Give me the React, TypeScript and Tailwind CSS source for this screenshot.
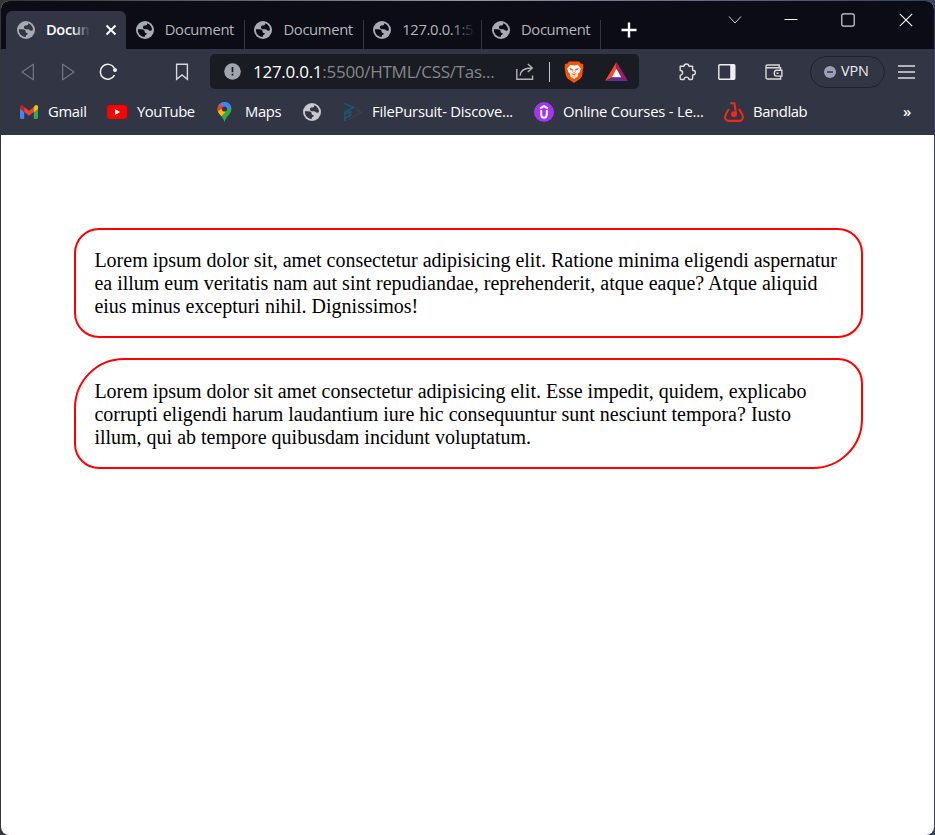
import React from "react";

function Globe({ color = "#a6abb3", bg = "#0b0c15" }: { color?: string; bg?: string }) {
  return (
    <svg className="block h-[18px] w-[18px] shrink-0" viewBox="0 0 18 18" fill="none">
      <circle cx="9" cy="9" r="9" fill={color} />
      <path d="M1.9 8.3 H5.2 C7.4 8.3 8.6 9.1 8.6 10.6 C8.6 11.9 9.4 12.1 10.6 12.1 V13.3 C10.6 13.9 9.4 13.8 9.1 14.3 C8.8 14.9 9 15.6 8.6 16 C4.8 15.9 1.6 12.6 1.9 8.3Z" fill={bg} />
      <path d="M11.2 2.3 C14.3 3.4 16 6 16 8.9 C15.4 9.7 14.4 9.9 13.4 9.5 C12.5 9.1 12.2 8.3 11.3 8.2 H8.8 C7.6 8.2 6.9 7.4 6.9 6.3 C6.9 5.2 7.7 4.6 8.8 4.6 H9.6 C10.5 4.6 11.3 3.6 11.2 2.3Z" fill={bg} />
    </svg>
  );
}

function Tab({ title, fade }: { title: string; fade?: boolean }) {
  return (
    <div className="flex h-[38px] w-[118.75px] shrink-0 items-center pl-[9.7px]">
      <Globe />
      <div className="relative -top-px ml-[11px] h-5 w-[73px] overflow-hidden whitespace-nowrap text-[14.8px] leading-5 tracking-[-0.35px] text-[#b4b5ba]">
        {title}
        {fade && <span className="absolute inset-y-0 right-0 w-6 bg-linear-to-r from-transparent to-[#0b0c15]" />}
      </div>
      <div className="ml-auto mt-[9px] h-[29px] w-px bg-[#35363d]" />
    </div>
  );
}

function TabStrip() {
  return (
    <div className="flex h-12 items-start bg-[#0b0c15] pl-[5px]">
      <div className="mt-[10px] flex h-[38px] w-[120px] shrink-0 items-center rounded-t-[6px] bg-[#323543] pl-[11px]">
        <Globe bg="#323543" />
        <div className="relative -top-px ml-[11px] h-5 w-[44px] overflow-hidden whitespace-nowrap text-[14.6px] font-semibold leading-5 tracking-[-0.35px] text-white">
          Document
          <span className="absolute inset-y-0 right-0 w-[18px] bg-linear-to-r from-transparent to-[#323543]" />
        </div>
        <svg className="ml-[15px] h-[12px] w-[12px]" viewBox="0 0 12 12" stroke="white" strokeWidth="1.9"><path d="M1.5 1.5 10.5 10.5M10.5 1.5 1.5 10.5" /></svg>
      </div>
      <div className="mt-[10px] flex shrink-0">
        <Tab title="Document" />
        <Tab title="Document" />
        <Tab title="127.0.0.1:5500" fade />
        <Tab title="Document" />
      </div>
      <svg className="ml-[20px] mt-[21px] h-4 w-4 shrink-0" viewBox="0 0 16 16" stroke="white" strokeWidth="2.4"><path d="M8 .5V15.5M.5 8H15.5" /></svg>
      <svg className="ml-[91px] mt-[13px] h-3 w-[14px] shrink-0" viewBox="0 0 14 12" fill="none" stroke="#d3d3d7" strokeWidth="1"><path d="M1 2.5 7 9 13 2.5" /></svg>
      <svg className="ml-[42px] mt-[12px] h-[14px] w-[14px] shrink-0" viewBox="0 0 14 14" stroke="white" strokeWidth="1"><path d="M.5 6.5H13.5" /></svg>
      <svg className="ml-[43px] mt-[12px] h-[14px] w-[14px] shrink-0" viewBox="0 0 14 14" fill="none" stroke="#d8d8dc" strokeWidth="1.2"><rect x=".8" y=".8" width="12.4" height="12.4" rx="1.7" /></svg>
      <svg className="ml-[43.5px] mt-[12px] h-[14px] w-[14px] shrink-0" viewBox="0 0 14 14" stroke="white" strokeWidth="1.1"><path d="M.8 .8 13.2 13.2M13.2 .8 .8 13.2" /></svg>
    </div>
  );
}

function Shield() {
  return (
    <svg className="h-[22px] w-5 shrink-0" viewBox="0 0 20 22">
      <path d="M5 .5H15L17 2.7 19 2.8 19.4 6 18.2 14.2C17.8 16 16.5 17.5 15 18.6L10 22 5 18.6C3.5 17.5 2.2 16 1.8 14.2L.6 6 1 2.8 3 2.7Z" fill="#fb5206" />
      <path d="M6.2 3.8 10 4.5 13.8 3.8 16.8 7.5 15.7 11 13.6 13.5 13.8 15.2 10 18.1 6.2 15.2 6.4 13.5 4.3 11 3.2 7.5Z" fill="white" />
      <path d="M5.2 7.1 9 7.9 8.4 9.3 6.4 9ZM14.8 7.1 11 7.9 11.6 9.3 13.6 9ZM7.2 12.2 9.1 12.4 10 13.2 10.9 12.4 12.8 12.2 11.2 13.8 10 14.6 8.8 13.8Z" fill="#fb5206" />
      <path d="M9 8.6 8.7 11.1 10 12.2 11.3 11.1 11 8.6M8 16 10 14.9 12 16" fill="none" stroke="#fb5206" strokeWidth=".6" />
    </svg>
  );
}

function Toolbar() {
  return (
    <div className="flex h-[45px] items-center pl-[20px]">
      <svg className="h-[18px] w-[14px] shrink-0" viewBox="0 0 14 18" fill="none" stroke="#747681" strokeWidth="1.2" strokeLinejoin="round"><path d="M12.4 1.2V16.8L.9 9Z" /></svg>
      <svg className="ml-[26px] h-[18px] w-[14px] shrink-0" viewBox="0 0 14 18" fill="none" stroke="#747681" strokeWidth="1.2" strokeLinejoin="round"><path d="M1.6 1.2V16.8L13.1 9Z" /></svg>
      <svg className="ml-[24px] h-[18px] w-[19px] shrink-0" viewBox="0 0 19 18" fill="none" stroke="#f1f1f3" strokeWidth="1.5"><path d="M15.3 5A7.5 7.5 0 1 0 15.5 12.2" /><circle cx="16" cy="7" r="2" fill="#f1f1f3" stroke="none" /></svg>
      <svg className="ml-[57px] h-[18px] w-[14px] shrink-0" viewBox="0 0 14 18" fill="none" stroke="#d9d9dd" strokeWidth="1.4"><path d="M1.6 1.3H12.4V16.3L7 12 1.6 16.3Z" /></svg>
      <div className="ml-[21px] flex h-[35px] w-[429px] shrink-0 items-center rounded-[5px] bg-[#191c22] pl-[14px]">
        <svg className="h-[17px] w-[17px] shrink-0" viewBox="0 0 17 17"><circle cx="8.5" cy="8.5" r="8.3" fill="#a1a5ad" /><path d="M8.5 4V9.3M8.5 10.8V12.6" stroke="#191c22" strokeWidth="1.7" /></svg>
        <div className="ml-[12px] w-[244px] whitespace-nowrap text-[17px] leading-6 tracking-[-0.27px] text-[#85878c]"><span className="text-white">127.0.0.1</span>:5500/HTML/CSS/Tas...</div>
        <svg className="ml-[18px] h-[18px] w-[20px] shrink-0" viewBox="0 0 20 18" fill="none" stroke="#b2b3b6" strokeWidth="1.4"><path d="M1.8 6V16.2H17.6V12.5M5.2 12.6C5.4 8 8.5 5 16.8 5M12.8 .9 17.3 5 12.8 9.1" /></svg>
        <div className="ml-[14px] h-5 w-px bg-[#c4c4c8]" />
        <div className="ml-[14px] flex"><Shield /></div>
        <svg className="ml-[21px] h-5 w-[23px] shrink-0" viewBox="0 0 23 20"><path d="M11.5 0 0 19 7.2 15.5 11.5 7.5Z" fill="#ff4724" /><path d="M11.5 0 23 19 15.8 15.5 11.5 7.5Z" fill="#9e1f63" /><path d="M0 19H23L15.8 15.2H7.2Z" fill="#662d91" /><path d="M11.5 6.8 16.2 15.3H6.8Z" fill="white" /></svg>
      </div>
      <svg className="ml-[39px] h-[18px] w-[19px] shrink-0" viewBox="0 0 19 18" fill="none" stroke="#dddde1" strokeWidth="1.4" strokeLinejoin="round"><path d="M2.2 3.2H6Q6.2 1 8.5 1T11 3.2H14.6V7.2Q17.4 7.2 17.4 9.6T14.6 12V15.2Q14.6 16.5 13.3 16.5H11Q10.8 14.1 8.5 14.1T6 16.5H3.4Q2.2 16.5 2.2 15.2V12.4Q4.6 11.8 4.6 9.8T2.2 7.3Z" /></svg>
      <svg className="ml-[21px] h-4 w-[18px] shrink-0" viewBox="0 0 18 16"><rect x=".8" y=".8" width="16" height="14.4" rx="1" fill="none" stroke="#eeeef0" strokeWidth="1.4" /><path d="M12.2 1H17V15H12.2Z" fill="#eeeef0" /></svg>
      <svg className="ml-[29px] h-4 w-[18px] shrink-0" viewBox="0 0 18 16" fill="none" stroke="#d9d9dd" strokeWidth="1.4"><path d="M15.6 6.2V3.8H2.4A1.4 1.4 0 0 1 2.4 1H14.2V3.6M1 2.4V13.6Q1 15 2.4 15H15.6V12.2M16.9 6.3H11.5Q9.3 6.3 9.3 9.2T11.5 12.1H16.9ZM11.5 9.2H13.4" /></svg>
      <div className="ml-[27px] flex h-8 w-[75px] shrink-0 items-center rounded-full border border-[#20222d] pl-[13px] text-[14.4px] text-[#ededf1]">
        <svg className="mr-[5px] h-3 w-3 shrink-0" viewBox="0 0 12 12"><circle cx="6" cy="6" r="6" fill="#9b9fb8" /><path d="M3 6H9" stroke="#323543" strokeWidth="1.5" /></svg>
        <span className="relative -top-px tracking-[-0.1px]">VPN</span>
      </div>
      <svg className="ml-[13px] h-[14px] w-[17px] shrink-0" viewBox="0 0 17 14" stroke="#dddde1" strokeWidth="1.3"><path d="M0 1H17M0 7H17M0 13H17" /></svg>
    </div>
  );
}

function Bookmarks() {
  return (
    <div className="flex h-[40px] items-center pb-[4px] pl-[19px] text-[14.8px] leading-5 text-white whitespace-nowrap [&>span]:pb-[2px]">
      <svg className="h-[14px] w-[18px] shrink-0" viewBox="0 0 18 14">
        <path d="M0 3H4.2V14H1.3Q0 14 0 12.7Z" fill="#4285f4" /><path d="M13.8 3H18V12.7Q18 14 16.7 14H13.8Z" fill="#34a853" />
        <path d="M4.2 2 9 5.7 13.8 2V7L9 10.7 4.2 7Z" fill="#ea4335" /><path d="M0 4V2C0 .2 2-.6 3.4.9L4.2 1.8V7.2Z" fill="#c5221f" /><path d="M18 4V2C18 .2 16-.6 14.6.9L13.8 1.8V7.2Z" fill="#fbbc04" />
      </svg>
      <span className="ml-[10px] w-[39px] tracking-[-0.3px]">Gmail</span>
      <svg className="ml-[20px] h-[14px] w-5 shrink-0" viewBox="0 0 20 14"><rect width="20" height="14" rx="3.4" fill="red" /><path d="M8 4 13.2 7 8 10Z" fill="white" /></svg>
      <span className="ml-[10px] w-[58px] tracking-[-0.45px]">YouTube</span>
      <svg className="ml-[22px] h-5 w-[15px] shrink-0" viewBox="0 0 15 20">
        <defs><clipPath id="pin"><path d="M7.5 0A7 7 0 0 0 .5 7C.5 12 5.5 13.5 7.5 20 9.5 13.5 14.5 12 14.5 7A7 7 0 0 0 7.5 0Z" /></clipPath></defs>
        <g clipPath="url(#pin)"><path d="M0 0H15V20H0Z" fill="#34a853" /><path d="M0 0H15V3L7.5 9 0 4Z" fill="#4285f4" /><path d="M0 3 3 1.7 7.5 6.5 0 13Z" fill="#ea4335" /><path d="M0 10 7.5 5 9.5 9 2.5 16Z" fill="#fbbc04" /><path d="M7.5 7 12 1.3 15 6H9Z" fill="#4285f4" /></g>
        <circle cx="7.5" cy="7" r="2.6" fill="#323543" />
      </svg>
      <span className="ml-[13px] w-[37px] tracking-[-0.35px]">Maps</span>
      <div className="ml-[21px]"><Globe color="#c7c9ce" bg="#323543" /></div>
      <svg className="ml-[22px] h-5 w-[19px] shrink-0" viewBox="0 0 19 20" fill="none" strokeWidth="1.8"><path d="M1.2 1.2 10.5 5.6 1.5 10.2M1.8 9.5V19M1.8 12 7.5 9.6V13.4L1.8 16.4" stroke="#1c5470" /><path d="M12.6 6.8 18 10.2 6 17.6" stroke="#3f4045" strokeWidth="1.4" /></svg>
      <span className="ml-[10px] w-[141px] tracking-[-0.22px]">FilePursuit- Discove...</span>
      <svg className="ml-[21px] h-5 w-5 shrink-0" viewBox="0 0 20 20"><circle cx="10" cy="10" r="10" fill="#a435f0" /><path d="M6.2 6.4 10 4.2 13.8 6.4M7.2 8V12.2C7.2 17 12.8 17 12.8 12.2V8" fill="none" stroke="white" strokeWidth="2" /></svg>
      <span className="ml-[9px] w-[141px] tracking-[-0.21px]">Online Courses - Le...</span>
      <svg className="ml-[20px] h-5 w-5 shrink-0" viewBox="0 0 20 20" fill="none" stroke="#f32818" strokeWidth="2.1"><path d="M4.9 7 2 12C0 16 1.5 18.9 4.8 18.9H15.2C18.5 18.9 20 16 18 12L15.1 7" /><path d="M6.3 1.2H10.4L12.1 12.2" /><circle cx="10" cy="12.2" r="2.9" fill="#f32818" stroke="none" /></svg>
      <span className="ml-[9px] w-[54px] tracking-[-0.38px]">Bandlab</span>
      <span className="ml-[96px] text-[15px] font-semibold">»</span>
    </div>
  );
}

export default function App() {
  return (
    <div className="h-[835px] w-[935px] overflow-hidden bg-linear-to-r from-[#343638] via-[#9a91a5] to-[#35435b] pl-px pr-px pt-px">
      <div className="flex h-[834px] w-[933px] flex-col overflow-hidden rounded-[8px] bg-white [font-family:'Open_Sans','Noto_Sans',sans-serif]">
        <TabStrip />
        <div className="h-[86px] shrink-0 bg-[#323543]">
          <Toolbar />
          <Bookmarks />
        </div>
        <main className="px-[73px] pt-[93px] text-[20px] leading-[23px] text-black [font-family:'Liberation_Serif',serif]">
          <p className="h-[110px] w-[789px] whitespace-nowrap rounded-[25px] border-2 border-[#f00] px-[18.4px] pt-[18.5px]">
            Lorem ipsum dolor sit, amet consectetur adipisicing elit. Ratione minima eligendi aspernatur<br />
            ea illum eum veritatis nam aut sint repudiandae, reprehenderit, atque eaque? Atque aliquid<br />
            eius minus excepturi nihil. Dignissimos!
          </p>
          <p className="mt-[20px] h-[111px] w-[789px] whitespace-nowrap rounded-[25px] rounded-tl-[50px] rounded-br-[50px] border-2 border-[#f00] px-[18.4px] pt-[19.5px]">
            Lorem ipsum dolor sit amet consectetur adipisicing elit. Esse impedit, quidem, explicabo<br />
            corrupti eligendi harum laudantium iure hic consequuntur sunt nesciunt tempora? Iusto<br />
            illum, qui ab tempore quibusdam incidunt voluptatum.
          </p>
        </main>
      </div>
    </div>
  );
}
